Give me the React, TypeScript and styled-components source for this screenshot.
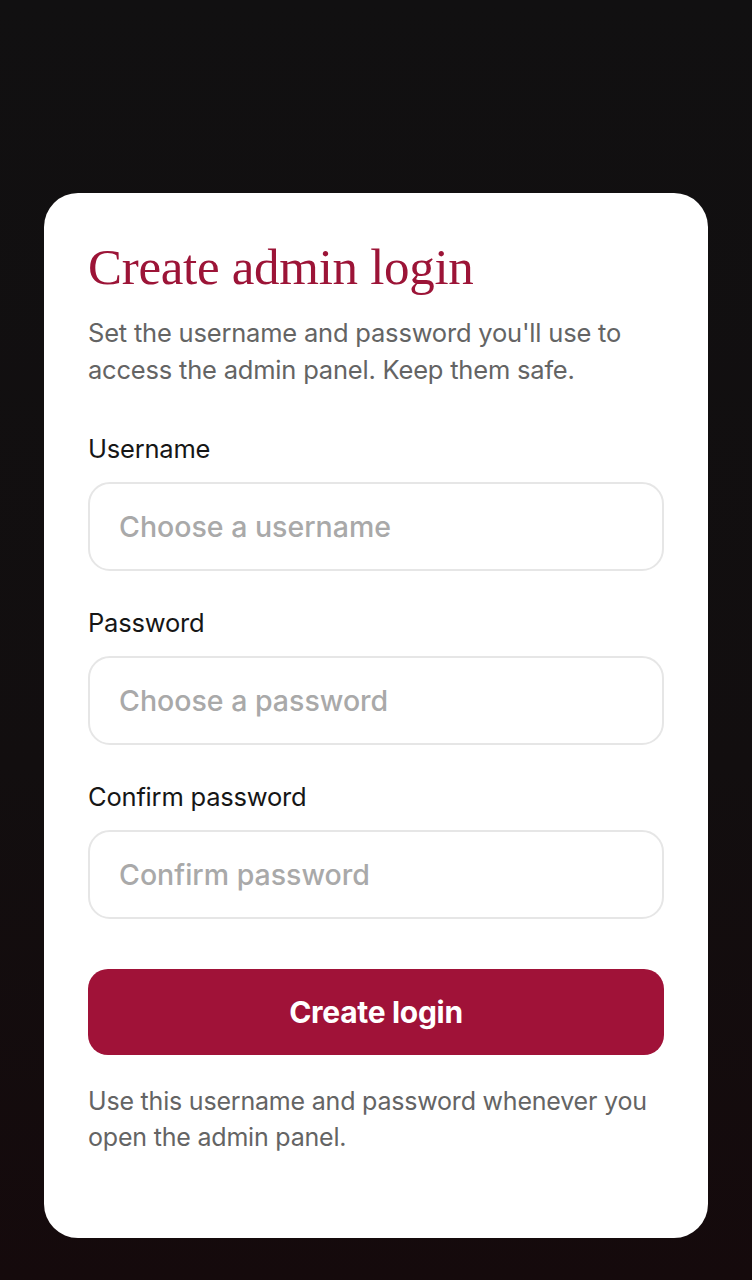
import styled, { createGlobalStyle } from 'styled-components';

const fields = [
	{ label: 'Username', placeholder: 'Choose a username', type: 'text' },
	{ label: 'Password', placeholder: 'Choose a password', type: 'password' },
	{ label: 'Confirm password', placeholder: 'Confirm password', type: 'password' }
];

const GlobalStyle = createGlobalStyle`
	html, body {
		margin: 0;
		padding: 0;
		background: #111011;
	}
	* {
		box-sizing: border-box;
	}
`;

const Page = styled.div`
	min-height: 1280px;
	width: 100%;
	display: flex;
	flex-direction: column;
	align-items: center;
	padding: 193px 44px 42px;
	background: linear-gradient(180deg, #111011 0%, #120e0f 60%, #150a0c 100%);
	font-family: Inter, 'Liberation Sans', sans-serif;
`;

const Card = styled.div`
	width: 100%;
	height: 1045px;
	background: #ffffff;
	border-radius: 34px;
	padding: 44px 44px 0;
	display: flex;
	flex-direction: column;
`;

const Title = styled.h1`
	margin: 0;
	font-family: 'Liberation Serif', serif;
	font-weight: 400;
	font-size: 51px;
	line-height: 60px;
	color: #9c1437;
	letter-spacing: -0.3px;
`;

const Subtitle = styled.p`
	margin: 17px 0 0;
	font-size: 25.5px;
	line-height: 37px;
	color: #646464;
	letter-spacing: -0.2px;
`;

const Form = styled.form`
	display: flex;
	flex-direction: column;
	margin-top: 46px;
`;

const Field = styled.label`
	display: flex;
	flex-direction: column;
	gap: 18px;
	margin-bottom: 37px;
`;

const Label = styled.span`
	font-size: 25.5px;
	line-height: 30px;
	color: #161616;
	letter-spacing: -0.2px;
`;

const Input = styled.input`
	height: 89px;
	width: 100%;
	border: 2px solid #e6e6e6;
	border-radius: 22px;
	padding: 0 29px;
	font-family: Inter, 'Liberation Sans', sans-serif;
	font-size: 28.5px;
	font-weight: 500;
	color: #222;
	outline: none;
	background: #fff;
	&::placeholder {
		color: #a9a9a9;
	}
`;

const Button = styled.button`
	margin-top: 13px;
	height: 86px;
	width: 100%;
	border: none;
	border-radius: 20px;
	background: #a01238;
	color: #ffffff;
	font-family: Inter, 'Liberation Sans', sans-serif;
	font-size: 30px;
	font-weight: 700;
	letter-spacing: -0.3px;
	cursor: pointer;
`;

const Note = styled.p`
	margin: 28px 0 0;
	font-size: 25px;
	line-height: 36px;
	color: #646464;
	letter-spacing: -0.2px;
`;

const App = () => {
	return (
		<>
			<GlobalStyle />
			<Page>
				<Card>
					<Title>Create admin login</Title>
					<Subtitle>
						Set the username and password you'll use to access the admin panel. Keep them safe.
					</Subtitle>
					<Form onSubmit={(e) => e.preventDefault()}>
						{fields.map((f) => (
							<Field key={f.label}>
								<Label>{f.label}</Label>
								<Input type={f.type} placeholder={f.placeholder} />
							</Field>
						))}
						<Button type="submit">Create login</Button>
					</Form>
					<Note>Use this username and password whenever you open the admin panel.</Note>
				</Card>
			</Page>
		</>
	);
};

export default App;
